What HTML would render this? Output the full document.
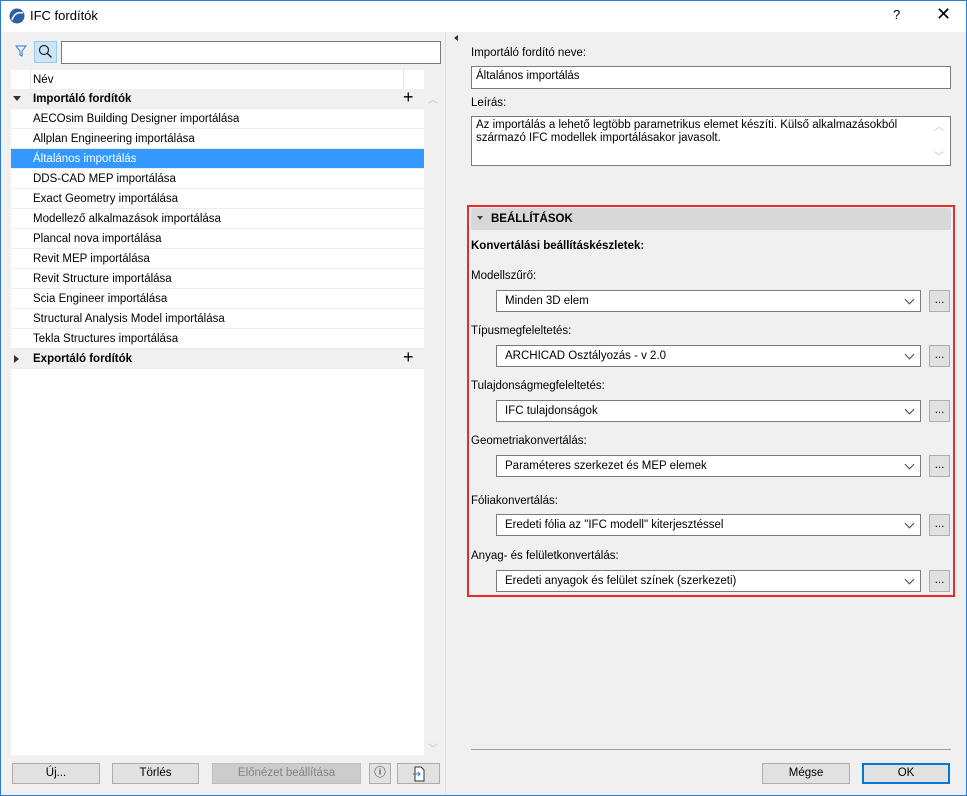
<!DOCTYPE html>
<html><head><meta charset="utf-8"><style>
*{box-sizing:border-box;margin:0;padding:0}
body{width:967px;height:796px;position:relative;font-family:"Liberation Sans",sans-serif;font-size:11.5px;color:#000;background:#f0f0f0;overflow:hidden}
.abs{position:absolute}
.win{left:0;top:0;width:967px;height:796px;border:1px solid #2b79d0}
.title{left:1px;top:1px;width:965px;height:31px;background:#fff}
.row{position:absolute;left:11px;width:413px;height:20px;line-height:20px;padding-left:22px;background:#fff;border-bottom:1px solid #ececec;white-space:nowrap}
.grp{background:#f0f0f0;font-weight:bold}
.sel{background:#3399ff;color:#fff}
.btn{position:absolute;height:21px;border:1px solid #adadad;background:#e1e1e1;text-align:center;line-height:19px}
.dd{position:absolute;left:496px;width:425px;height:22px;background:#fff;border:1px solid #7a7a7a;line-height:20px;padding-left:8px}
.dd:after{content:"";position:absolute;right:7px;top:5px;width:6px;height:6px;border-right:1px solid #444;border-bottom:1px solid #444;transform:rotate(45deg)}
.dots{position:absolute;left:929px;width:21px;height:22px;border:1px solid #adadad;background:#e1e1e1;text-align:center;line-height:18px}
.lbl{position:absolute;left:471px}
</style></head><body>
<div class="abs win"></div>
<div class="abs title"></div>
<svg class="abs" style="left:9px;top:8px" width="16" height="16"><circle cx="8" cy="8" r="7.5" fill="#2d5fa8"/><path d="M3 12 Q6 3 14 5" stroke="#fff" stroke-width="1.5" fill="none"/></svg>
<div class="abs" style="left:30px;top:8px;font-size:13px">IFC fordítók</div>
<div class="abs" style="left:893px;top:7px;font-size:13px">?</div>
<div class="abs" style="left:936px;top:4px;font-size:18px">✕</div>

<svg class="abs" style="left:15px;top:45px" width="12" height="12"><path d="M1 1H11L7 6V11L5 10V6Z" fill="none" stroke="#2b79d0"/></svg>
<div class="abs" style="left:34px;top:41px;width:23px;height:22px;background:#cce4f7;border:1px solid #99c9ef"></div>
<svg class="abs" style="left:38px;top:44px" width="15" height="15"><circle cx="6" cy="6" r="4.5" fill="none" stroke="#222" stroke-width="1.2"/><path d="M9.5 9.5L13.5 13.5" stroke="#222" stroke-width="1.4"/></svg>
<div class="abs" style="left:61px;top:41px;width:380px;height:23px;background:#fff;border:1px solid #7a7a7a"></div>

<div class="abs" style="left:11px;top:70px;width:413px;height:685px;background:#fff"></div>
<div class="row" style="top:70px;padding-left:22px;border-bottom:none">Név</div>
<div class="abs" style="left:30px;top:70px;width:1px;height:19px;background:#e5e5e5"></div>
<div class="abs" style="left:403px;top:70px;width:1px;height:19px;background:#e5e5e5"></div>
<div class="row grp" style="top:89px">Importáló fordítók</div>
<div class="abs" style="left:13px;top:96px;width:0;height:0;border:4px solid transparent;border-top:5px solid #333"></div>
<div class="abs" style="left:403px;top:87px;font-size:18px">+</div>
<div class="row" style="top:109px">AECOsim Building Designer importálása</div>
<div class="row" style="top:129px">Allplan Engineering importálása</div>
<div class="row sel" style="top:149px">Általános importálás</div>
<div class="row" style="top:169px">DDS-CAD MEP importálása</div>
<div class="row" style="top:189px">Exact Geometry importálása</div>
<div class="row" style="top:209px">Modellező alkalmazások importálása</div>
<div class="row" style="top:229px">Plancal nova importálása</div>
<div class="row" style="top:249px">Revit MEP importálása</div>
<div class="row" style="top:269px">Revit Structure importálása</div>
<div class="row" style="top:289px">Scia Engineer importálása</div>
<div class="row" style="top:309px">Structural Analysis Model importálása</div>
<div class="row" style="top:329px">Tekla Structures importálása</div>
<div class="row grp" style="top:349px">Exportáló fordítók</div>
<div class="abs" style="left:14px;top:355px;width:0;height:0;border:4px solid transparent;border-left:5px solid #333"></div>
<div class="abs" style="left:403px;top:347px;font-size:18px">+</div>
<div class="abs" style="left:428px;top:91px;color:#c0c0c0;font-size:10px">︿</div>
<div class="abs" style="left:428px;top:740px;color:#c0c0c0;font-size:10px">﹀</div>

<div class="btn" style="left:12px;top:763px;width:88px">Új...</div>
<div class="btn" style="left:112px;top:763px;width:87px">Törlés</div>
<div class="btn" style="left:212px;top:763px;width:149px;background:#ccc;border-color:#bfbfbf;color:#838383">Előnézet beállítása</div>
<div class="btn" style="left:369px;top:763px;width:22px">ⓘ</div>
<div class="btn" style="left:397px;top:763px;width:43px"><svg width="14" height="16" style="margin-top:2px"><path d="M3 1H9L12 4V15H3Z" fill="#fff" stroke="#333"/><path d="M1 8H8M6 6L8 8L6 10" stroke="#2b79d0" fill="none"/></svg></div>

<div class="abs" style="left:445px;top:32px;width:1px;height:762px;background:#e0e0e0"></div>
<div class="abs" style="left:451px;top:35px;width:0;height:0;border:3px solid transparent;border-right:4px solid #333"></div>

<div class="lbl" style="top:47px">Importáló fordító neve:</div>
<div class="abs" style="left:471px;top:66px;width:480px;height:23px;background:#fff;border:1px solid #7a7a7a;padding:3px 4px">Általános importálás</div>
<div class="lbl" style="top:97px">Leírás:</div>
<div class="abs" style="left:471px;top:116px;width:480px;height:50px;background:#fff;border:1px solid #7a7a7a;padding:2px 4px;line-height:13px">Az importálás a lehető legtöbb parametrikus elemet készíti. Külső alkalmazásokból származó IFC modellek importálásakor javasolt.</div>
<div class="abs" style="left:934px;top:118px;color:#c0c0c0;font-size:10px">︿</div>
<div class="abs" style="left:934px;top:148px;color:#c0c0c0;font-size:10px">﹀</div>

<div class="abs" style="left:467px;top:205px;width:488px;height:392px;border:2px solid #e52b2b"></div>
<div class="abs" style="left:471px;top:208px;width:480px;height:22px;background:#d8d8d8;border-radius:2px;font-weight:bold;line-height:22px;padding-left:20px">BEÁLLÍTÁSOK</div>
<div class="abs" style="left:477px;top:216px;width:0;height:0;border:3px solid transparent;border-top:4px solid #444"></div>
<div class="lbl" style="top:240px;font-weight:bold">Konvertálási beállításkészletek:</div>

<div class="lbl" style="top:270px">Modellszűrő:</div>
<div class="dd" style="top:290px">Minden 3D elem</div><div class="dots" style="top:290px">...</div>
<div class="lbl" style="top:325px">Típusmegfeleltetés:</div>
<div class="dd" style="top:345px">ARCHICAD Osztályozás - v 2.0</div><div class="dots" style="top:345px">...</div>
<div class="lbl" style="top:380px">Tulajdonságmegfeleltetés:</div>
<div class="dd" style="top:400px">IFC tulajdonságok</div><div class="dots" style="top:400px">...</div>
<div class="lbl" style="top:435px">Geometriakonvertálás:</div>
<div class="dd" style="top:455px">Paraméteres szerkezet és MEP elemek</div><div class="dots" style="top:455px">...</div>
<div class="lbl" style="top:495px">Fóliakonvertálás:</div>
<div class="dd" style="top:514px">Eredeti fólia az "IFC modell" kiterjesztéssel</div><div class="dots" style="top:514px">...</div>
<div class="lbl" style="top:550px">Anyag- és felületkonvertálás:</div>
<div class="dd" style="top:570px">Eredeti anyagok és felület színek (szerkezeti)</div><div class="dots" style="top:570px">...</div>

<div class="abs" style="left:471px;top:749px;width:480px;height:1px;background:#a0a0a0"></div>
<div class="btn" style="left:762px;top:763px;width:88px">Mégse</div>
<div class="btn" style="left:862px;top:763px;width:88px;border:2px solid #0078d7;line-height:17px">OK</div>
</body></html>
